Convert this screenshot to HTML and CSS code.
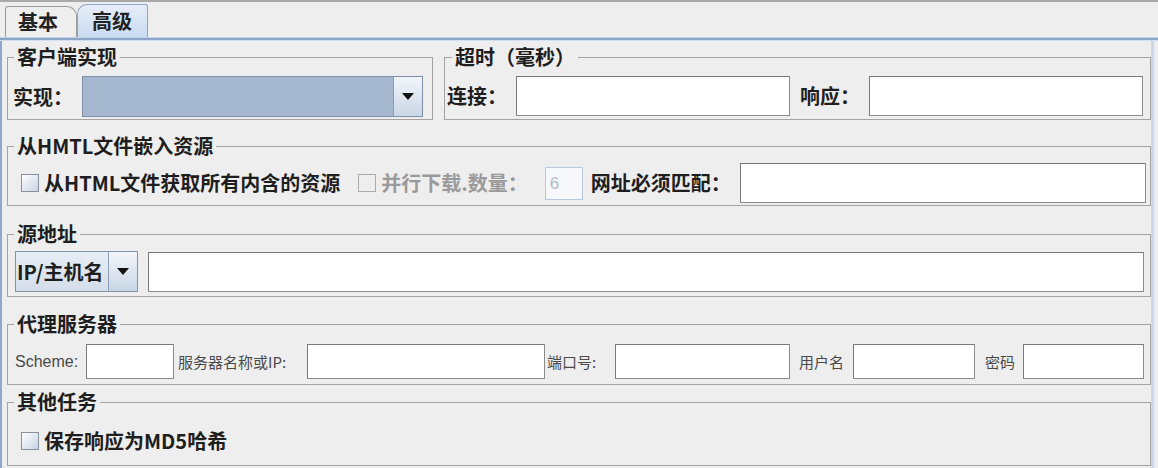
FILE: index.html
```html
<!DOCTYPE html>
<html lang="zh-CN">
<head>
<meta charset="utf-8">
<title>高级</title>
<link rel="stylesheet" href="styles.css">
</head>
<body>
<div class="topline"></div>
<div class="tabs">
  <div class="tab">基本</div>
  <div class="tab active">高级</div>
</div>
<div class="band"></div>
<div class="panel">
  <div class="row1">
    <fieldset class="g g-client">
      <legend>客户端实现</legend>
      <div class="line">
        <span class="lbl">实现：</span>
        <div class="combo combo-impl">
          <span class="combo-val"></span>
          <span class="combo-btn"><svg width="12" height="7" viewBox="0 0 12 7"><path d="M0 0H12L6 7Z" fill="#111"/></svg></span>
        </div>
      </div>
    </fieldset>
    <fieldset class="g g-timeout">
      <legend class="lg-wide">超时（毫秒）</legend>
      <div class="line">
        <span class="lbl">连接：</span>
        <input class="tf tf-time" type="text">
        <span class="lbl lbl-resp">响应：</span>
        <input class="tf tf-time" type="text">
      </div>
    </fieldset>
  </div>

  <fieldset class="g g-embed">
    <legend>从HMTL文件嵌入资源</legend>
    <div class="line">
      <span class="cb"></span>
      <span class="lbl cb-lbl">从HTML文件获取所有内含的资源</span>
      <span class="cb cb-dis"></span>
      <span class="lbl cb-lbl dis">并行下载.数量：</span>
      <span class="tf tf-num">6</span>
      <span class="lbl lbl-url">网址必须匹配：</span>
      <input class="tf tf-url" type="text">
    </div>
  </fieldset>

  <fieldset class="g g-src">
    <legend>源地址</legend>
    <div class="line">
      <div class="combo combo-ip">
        <span class="combo-val">IP/主机名</span>
        <span class="combo-btn"><svg width="12" height="7" viewBox="0 0 12 7"><path d="M0 0H12L6 7Z" fill="#111"/></svg></span>
      </div>
      <input class="tf tf-src" type="text">
    </div>
  </fieldset>

  <fieldset class="g g-proxy">
    <legend>代理服务器</legend>
    <div class="line">
      <span class="sl sl-scheme">Scheme:</span>
      <input class="tf tf-sm tf-scheme" type="text">
      <span class="sl sl-host">服务器名称或IP:</span>
      <input class="tf tf-sm tf-host" type="text">
      <span class="sl sl-port">端口号:</span>
      <input class="tf tf-sm tf-port" type="text">
      <span class="sl sl-user">用户名</span>
      <input class="tf tf-sm tf-user" type="text">
      <span class="sl sl-pass">密码</span>
      <input class="tf tf-sm tf-pass" type="text">
    </div>
  </fieldset>

  <fieldset class="g g-other">
    <legend>其他任务</legend>
    <div class="line">
      <span class="cb"></span>
      <span class="lbl cb-lbl">保存响应为MD5哈希</span>
    </div>
  </fieldset>
</div>
</body>
</html>
```

FILE: styles.css
```css
* { box-sizing: border-box; }
html, body {
  margin: 0;
  padding: 0;
  width: 1158px;
  height: 468px;
  overflow: hidden;
  background: #eeeeee;
  font-family: "Noto Sans CJK SC", "Liberation Sans", sans-serif;
  color: #1a1a1a;
}
.topline {
  height: 2px;
  background: #a9a9a9;
}
.tabs {
  height: 35px;
  display: flex;
  align-items: flex-end;
  padding-left: 5px;
}
.tab {
  width: 72px;
  height: 31px;
  border: 1px solid #9c9c9c;
  border-bottom: none;
  border-radius: 3px 10px 0 0;
  padding-left: 12px;
  font-size: 20px;
  font-weight: 700;
  line-height: 29px;
  color: #222;
  background: #eeeeee;
}
.tab.active {
  width: 71px;
  height: 33px;
  border-color: #8ea4c4;
  border-radius: 10px 3px 0 0;
  padding-left: 14px;
  line-height: 31px;
  background: linear-gradient(#e6eef8, #c9dbf0);
}
.band {
  height: 4px;
  border-top: 1px solid #c2d3ea;
  border-bottom: 1px solid #d3e0f1;
  background: #8ea5c7;
}
.panel {
  width: 1154px;
  height: 428px;
  border-left: 2px solid #8fa8cb;
  border-right: 3px solid #c9d8ec;
  padding: 6px 0 0 5px;
}
.row1 {
  display: flex;
  gap: 11px;
}
.g {
  margin: 0;
  min-width: 0;
  border: 1px solid #a3a3a3;
  padding: 0 6px 2px 4px;
}
.g legend {
  padding: 0 3px 0 3px;
  margin-left: 2px;
  font-size: 20px;
  line-height: 20px;
  font-weight: 700;
  color: #1e1e1e;
}
.g legend.lg-wide { margin-left: 5px; }
.line {
  display: flex;
  align-items: center;
}
.lbl {
  font-size: 20px;
  font-weight: 700;
  line-height: 24px;
  color: #1e1e1e;
  white-space: nowrap;
}
.tf {
  display: block;
  margin: 0;
  padding: 0 5px;
  background: #fff;
  border: 1px solid #8c8c8c;
  border-top-color: #7a7a7a;
  border-left-color: #7a7a7a;
  outline: none;
  font-family: "Liberation Sans", sans-serif;
}

/* group 1 */
.g-client { width: 426px; padding-top: 9px; padding-bottom: 2px; }
.g-client .lbl { margin-left: 1px; }
.combo {
  display: flex;
  border: 1px solid #7e8ea6;
}
.combo-impl {
  width: 341px;
  height: 41px;
  margin-left: 9px;
}
.combo-val {
  flex: 1;
  background: #a4b7cf;
}
.combo-btn {
  width: 29px;
  display: flex;
  align-items: center;
  justify-content: center;
  border-left: 1px solid #8e9db3;
  background: linear-gradient(#f2f6fa, #c9d6e6);
}

/* group 2 */
.g-timeout { flex: 1; padding-top: 9px; padding-bottom: 3px; padding-left: 2px; }
.tf-time { width: 274px; height: 40px; margin-left: 9px; }
.lbl-resp { margin-left: 10px; }

/* group 3 */
.g-embed { margin-top: 16px; padding-top: 7px; padding-bottom: 2px; padding-right: 4px; }
.cb {
  display: block;
  width: 18px;
  height: 18px;
  margin-left: 9px;
  border: 1px solid #8a8f98;
  background: linear-gradient(135deg, #ffffff, #c6d3e5);
  flex-shrink: 0;
}
.cb-lbl { margin-left: 5px; }
.cb-dis {
  margin-left: 18px;
  border-color: #ababab;
  background: #eeeeee;
}
.dis { color: #9a9a9a; }
.tf-num {
  width: 38px;
  height: 33px;
  margin-left: 17px;
  border: 1px solid #b9c8dc;
  background: #f6f8fb;
  color: #b3bccb;
  font-size: 17px;
  line-height: 31px;
  padding-left: 4px;
}
.lbl-url { margin-left: 8px; }
.tf-url { flex: 1; height: 40px; margin-left: 9px; }

/* group 4 */
.g-src { margin-top: 18px; padding-top: 7px; padding-bottom: 4px; }
.combo-ip {
  width: 123px;
  height: 41px;
  margin-left: 3px;
  border-color: #8393aa;
}
.combo-ip .combo-val {
  background: linear-gradient(#e6edf5, #d4deea);
  font-size: 20px;
  font-weight: 700;
  line-height: 39px;
  padding-left: 1px;
  color: #1e1e1e;
}
.tf-src { flex: 1; height: 40px; margin-left: 10px; }

/* group 5 */
.g-proxy { margin-top: 17px; padding-top: 10px; padding-bottom: 5px; }
.sl {
  font-size: 15px;
  line-height: 20px;
  color: #4a4a4a;
  white-space: nowrap;
}
.sl-scheme { margin-left: 3px; font-family: "Liberation Sans", sans-serif; font-size: 16px; width: 71px; }
.tf-sm { height: 35px; }
.tf-scheme { width: 88px; }
.sl-host { margin-left: 4px; width: 129px; }
.tf-host { width: 238px; }
.sl-port { margin-left: 2px; width: 68px; }
.tf-port { width: 175px; }
.sl-user { margin-left: 9px; width: 54px; }
.tf-user { width: 122px; }
.sl-pass { margin-left: 10px; width: 38px; }
.tf-pass { width: 121px; }

/* group 6 */
.g-other { margin-top: 7px; padding-top: 17px; padding-bottom: 12px; }
```
